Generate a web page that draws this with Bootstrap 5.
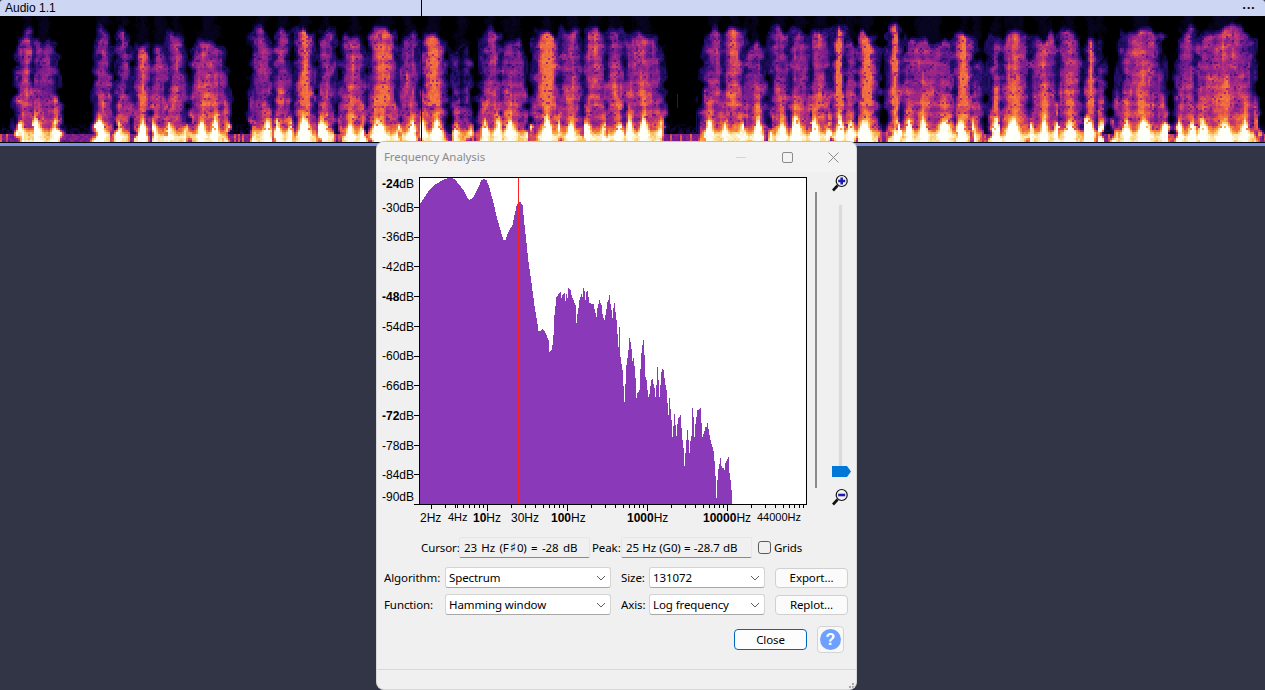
<!DOCTYPE html>
<html lang="en">
<head>
<meta charset="utf-8">
<title>Frequency Analysis</title>
<link href="https://cdn.jsdelivr.net/npm/bootstrap@5.3.0/dist/css/bootstrap.min.css" rel="stylesheet">
<style>
html,body{height:100%;overflow:hidden;background:#323546;margin:0}
body{position:relative;font-family:"Noto Sans","Open Sans",sans-serif;font-size:11.5px;letter-spacing:-.1px;color:#000}
.track-head{height:16px;background:#cdd6f2;font-family:"Liberation Sans",sans-serif;font-size:12px;letter-spacing:0;line-height:15px;padding:0 5px;border-radius:3px 3px 0 0}
.track-dots{font-size:8px;letter-spacing:1.6px;line-height:12px;padding-right:4px}
.spectro{display:block;width:1265px;height:126px;background:#000}
.track-edge{height:4px;background:#8090e0;border-top:1px solid #000}
.play-line{position:absolute;left:421px;top:0;width:1px;height:142px;background:#000}
.win{position:absolute;left:376px;top:141px;width:481px;height:549px;background:#f0f0f0;border:1px solid #d8d8d8;border-top-color:#c0c0c0;border-radius:8px;overflow:hidden}
.win-title{height:30px;background:#f3f3f3;color:#8b8b8b;padding-left:7px}
.win-ctl{width:46px;height:30px}
.plot-svg{display:block;width:435px;height:355px;font-family:"Liberation Sans",sans-serif;font-size:12px;letter-spacing:0}
.side-svg{display:block;width:44px;height:355px}
.readouts{height:21px;margin-top:10px;padding-left:44px}
.cap{white-space:nowrap}
.cap-cur{width:36px}
.cap-peak{width:27px}
.readout{width:131px;height:21px;line-height:19px;background:#f0f0f0;border:1px solid #e6e6e6;border-bottom-color:#8a8a8a;border-radius:2px;padding:0 4px;margin:0 2px;white-space:nowrap;word-spacing:.4px}
.readout-cur{word-spacing:1.5px}
.sharp-g{font-family:"DejaVu Sans",sans-serif;font-size:13px;margin:0 1px}
.chk{width:13px;height:13px;margin:0 3px 0 4px;background-color:#f0f0f0;border:1px solid #5a5a5a;border-radius:3px}
.ctl-grid{display:grid;grid-template-columns:61px 166px 10px 28px 116px 10px 73px;row-gap:6px;padding-left:7px;margin-top:9px;align-items:center}
.pick{height:21px;min-height:21px;padding:0 18px 0 3px;font-size:11.5px;letter-spacing:-.1px;color:#000;border:1px solid #d4d4d4;border-bottom-color:#a8a8a8;border-radius:3px;background-image:url("data:image/svg+xml,%3Csvg xmlns='http://www.w3.org/2000/svg' viewBox='0 0 10 6'%3E%3Cpath d='M1 1l4 4 4-4' fill='none' stroke='%23606060'/%3E%3C/svg%3E");background-size:10px 6px;background-position:right 4px center;font-family:inherit;line-height:19px}
.act{height:20px;padding:0;font-size:11.5px;letter-spacing:-.1px;line-height:18px;color:#000;background:#fbfbfb;border:1px solid #d0d0d0;border-radius:4px;font-family:inherit}
.act-main{width:73px;height:21px;background:#fdfdfd;border-color:#0067c0}
.help-b{width:27px;height:27px;margin-left:10px;padding:0;background:#f8f8f8;border:1px solid #d4d4d4;border-radius:4px}
.help-dot{width:21px;height:21px;background:#6ea1ff;color:#fff;font:700 16px/21px "Liberation Sans",sans-serif}
.act-row{margin-top:11px;padding-right:12px}
.win-foot{position:absolute;left:0;right:0;top:527px;height:22px;border-top:1px solid #d9d9d9}
.grip{position:absolute;right:1px;bottom:0}
</style>
</head>
<body>
<div class="track-head d-flex justify-content-between align-items-center">
  <span>Audio 1.1</span><span class="track-dots">•••</span>
</div>
<canvas class="spectro" id="sp" width="1265" height="126"></canvas>
<div class="track-edge"></div>
<div class="play-line"></div>

<div class="win">
  <div class="win-title d-flex justify-content-between align-items-center">
    <span>Frequency Analysis</span>
    <div class="d-flex">
      <div class="win-ctl d-flex align-items-center justify-content-center"><svg width="10" height="10"><path d="M0 5.5H10" stroke="#d4d4d4"/></svg></div>
      <div class="win-ctl d-flex align-items-center justify-content-center"><svg width="11" height="11"><rect x=".5" y=".5" width="10" height="10" rx="1.5" fill="none" stroke="#8b8b8b"/></svg></div>
      <div class="win-ctl d-flex align-items-center justify-content-center"><svg width="11" height="11"><path d="M.5 .5L10.5 10.5M10.5 .5L.5 10.5" stroke="#8b8b8b"/></svg></div>
    </div>
  </div>
  <div class="d-flex">
    <svg class="plot-svg" viewBox="377 172 435 355">
      <rect x="419.5" y="177.5" width="387" height="327" fill="#fff"/>
      <polygon id="curve" fill="#8a3ab9" shape-rendering="crispEdges" points=""/>
      <rect x="518" y="177" width="1" height="327" fill="#ff2020" shape-rendering="crispEdges"/>
      <rect x="419.5" y="177.5" width="387" height="327" fill="none" stroke="#000"/>
      <path stroke="#000" fill="none" d="M414 207.5h5M414 237.5h5M414 266.5h5M414 296.5h5M414 326.5h5M414 356.5h5M414 385.5h5M414 415.5h5M414 445.5h5M414 474.5h5M414 504.5h5
        M431.5 505v4M445.5 505v3M455.5 505v3M457.5 505v3M463.5 505v3M469.5 505v3M474.5 505v3M479.5 505v3M483.5 505v3M487.5 505v6
        M511.5 505v3M525.5 505v3M535.5 505v3M543.5 505v3M549.5 505v3M554.5 505v3M559.5 505v3M563.5 505v3M567.5 505v6
        M591.5 505v3M605.5 505v3M615.5 505v3M623.5 505v3M629.5 505v3M634.5 505v3M639.5 505v3M643.5 505v3M647.5 505v6
        M671.5 505v3M685.5 505v3M695.5 505v3M703.5 505v3M709.5 505v3M714.5 505v3M719.5 505v3M723.5 505v3M727.5 505v6
        M751.5 505v3M765.5 505v3M775.5 505v3M783.5 505v3M789.5 505v3M794.5 505v3M799.5 505v3M803.5 505v3"/>
      <g text-anchor="end" fill="#000">
        <text x="414" y="188"><tspan font-weight="700">-24</tspan>dB</text>
        <text x="414" y="212">-30dB</text>
        <text x="414" y="241">-36dB</text>
        <text x="414" y="271">-42dB</text>
        <text x="414" y="301"><tspan font-weight="700">-48</tspan>dB</text>
        <text x="414" y="331">-54dB</text>
        <text x="414" y="360">-60dB</text>
        <text x="414" y="390">-66dB</text>
        <text x="414" y="420"><tspan font-weight="700">-72</tspan>dB</text>
        <text x="414" y="450">-78dB</text>
        <text x="414" y="479">-84dB</text>
        <text x="414" y="501">-90dB</text>
      </g>
      <g fill="#000">
        <text x="420" y="522">2Hz</text>
        <text x="448" y="521" font-size="11">4Hz</text>
        <text x="473" y="522"><tspan font-weight="700">10</tspan>Hz</text>
        <text x="511" y="522">30Hz</text>
        <text x="551" y="522"><tspan font-weight="700">100</tspan>Hz</text>
        <text x="627" y="522"><tspan font-weight="700">1000</tspan>Hz</text>
        <text x="703" y="522"><tspan font-weight="700">10000</tspan>Hz</text>
        <text x="757" y="521" font-size="11">44000Hz</text>
      </g>
    </svg>
    <svg class="side-svg" viewBox="812 172 44 355">
      <rect x="815" y="192" width="2" height="296" fill="#8a8a8a"/>
      <rect x="839" y="205" width="3" height="262" fill="#d6dada" stroke="#e2e4e4" stroke-width=".5"/>
      <path d="M832 466H847L851 471.5L847 477H832Z" fill="#0078d7"/>
      <circle cx="841.7" cy="181" r="5.5" fill="#f4f4f4" stroke="#111" stroke-width="1.2"/>
      <path d="M833 190.5L837.6 185.5" stroke="#111" stroke-width="2.6"/>
      <path d="M841.7 177.5V184.5M838.2 181H845.2" stroke="#1c1cb0" stroke-width="2.6"/>
      <circle cx="841.7" cy="495" r="5.5" fill="#f4f4f4" stroke="#111" stroke-width="1.2"/>
      <path d="M833 504.5L837.6 499.5" stroke="#111" stroke-width="2.6"/>
      <path d="M838.2 495H845.2" stroke="#1c1cb0" stroke-width="2.6"/>
    </svg>
  </div>
  <div class="readouts d-flex align-items-center">
    <span class="cap cap-cur">Cursor:</span>
    <div class="readout readout-cur">23 Hz (F<span class="sharp-g">♯</span>0) = -28 dB</div>
    <span class="cap cap-peak">Peak:</span>
    <div class="readout">25 Hz (G0) = -28.7 dB</div>
    <input class="form-check-input chk mt-0" type="checkbox" id="grids">
    <label for="grids" class="cap">Grids</label>
  </div>
  <div class="ctl-grid">
    <label class="cap">Algorithm:</label>
    <select class="form-select pick"><option>Spectrum</option></select>
    <span></span>
    <label class="cap">Size:</label>
    <select class="form-select pick"><option>131072</option></select>
    <span></span>
    <button class="btn act" type="button">Export...</button>
    <label class="cap">Function:</label>
    <select class="form-select pick"><option>Hamming window</option></select>
    <span></span>
    <label class="cap">Axis:</label>
    <select class="form-select pick"><option>Log frequency</option></select>
    <span></span>
    <button class="btn act" type="button">Replot...</button>
  </div>
  <div class="act-row d-flex justify-content-end align-items-center">
    <button class="btn act act-main" type="button">Close</button>
    <button class="btn help-b d-flex align-items-center justify-content-center" type="button"><span class="help-dot rounded-circle d-block">?</span></button>
  </div>
  <div class="win-foot">
    <svg class="grip" width="10" height="9" fill="#a8a8a8"><rect x="7" y="1" width="2" height="2"/><rect x="4" y="4" width="2" height="2"/><rect x="7" y="4" width="2" height="2"/><rect x="1" y="7" width="2" height="2"/><rect x="4" y="7" width="2" height="2"/><rect x="7" y="7" width="2" height="2"/></svg>
  </div>
</div>

<script>
(function(){
  var seed=12345;
  function R(){seed=(seed*1664525+1013904223)>>>0;return seed/4294967296;}
  function hash(i,j){var h=Math.sin(i*127.1+j*311.7)*43758.5453;return h-Math.floor(h);}
  function vn(x,y){var i=Math.floor(x),j=Math.floor(y),u=x-i,v=y-j;u=u*u*(3-2*u);v=v*v*(3-2*v);
    var a=hash(i,j),b=hash(i+1,j),c=hash(i,j+1),d=hash(i+1,j+1);return a+(b-a)*u+(c-a)*v+(a-b-c+d)*u*v;}
  function ss(a,b,x){var t=Math.max(0,Math.min(1,(x-a)/(b-a)));return t*t*(3-2*t);}

  var A=[420,203,424,197,429,190,434,185,439,182,444,179,448,178,452,178,455,180,459,185,463,190,467,198,469,200,472,198,474,195,478,187,481,180,483,179,486,180,489,188,493,203,496,216,498,223,501,234,503,240,505,240,507,234,510,228,512,225,514,215,516,206,518,202,520,202,522,205,524,225,526,243,528,262,531,283,534,306,537,324,538,331,540,331,542,329,544,331,546,335,548,340,549,352,551,350,552,345,553,335,554,315,556,297,558,294,560,292,562,295,564,293,566,294,568,288,570,290,571,295,573,300,575,305,576,323,578,308,579,300,581,294,583,290,585,292,587,291,589,303,592,304,594,309,596,317,597,308,599,300,601,305,602,315,604,320,606,309,607,302,609,297,611,310,612,318,613,308,614,303,616,320,618,347,619,328,620,357,622,370,624,402,626,365,628,350,629,338,630,342,632,355,634,360,636,395,639,390,640,370,641,353,642,345,643,340,645,370,648,400,650,388,651,380,653,377,655,392,656,385,657,367,658,380,659,397,660,385,661,372,663,370,665,385,666,390,668,415,669,398,671,420,672,437,674,414,675,425,676,430,678,418,680,415,682,440,683,448,684,466,686,440,687,430,689,450,691,435,692,408,693,420,694,433,696,415,698,410,700,408,702,437,704,430,707,420,709,437,712,447,714,455,716,496,717,480,718,469,720,458,721,466,722,468,724,470,725,463,728,457,729,473,730,480,731,490,732,504];
  var pts=['420,504'],k=0;
  for(var px=420;px<732;px++){
    while(k<A.length-4&&A[k+2]<=px)k+=2;
    var t=(px-A[k])/(A[k+2]-A[k]),yy=A[k+1]+(A[k+3]-A[k+1])*t;
    if(px>556&&px<730){var q=R();if(q<.14)yy+=R()*10;else if(q<.3)yy-=R()*3;}
    yy=Math.round(yy);
    pts.push(px+','+yy,(px+1)+','+yy);
  }
  pts.push('732,504');
  document.getElementById('curve').setAttribute('points',pts.join(' '));

  var c=document.getElementById('sp').getContext('2d');
  var stops=[[0,0,0,0],[.14,14,8,60],[.28,44,16,120],[.42,118,28,142],[.54,176,44,128],[.66,236,92,66],[.78,250,160,60],[.89,252,226,150],[1,255,255,250]];
  function col(v){v=Math.max(0,Math.min(1,v));for(var i=1;i<stops.length;i++){if(v<=stops[i][0]){var a=stops[i-1],b=stops[i],t=(v-a[0])/(b[0]-a[0]);return 'rgb('+Math.round(a[1]+(b[1]-a[1])*t)+','+Math.round(a[2]+(b[2]-a[2])*t)+','+Math.round(a[3]+(b[3]-a[3])*t)+')';}}return '#fff';}
  var B=[[19,32,30,.04,3],[33,52,38,0,8],
  [97,109,25,.01,3],[117,127,26,.02,2],[135,149,38,.07,2],[153,165,38,.02,3],[169,182,27,.05,3],[193,222,38,.05,6],
  [254,268,26,.02,4],[275,288,28,.03,3],[296,312,25,.1,3],[321,332,24,.02,3],[342,362,30,.06,3],[370,395,24,.1,3],[400,416,32,.03,3],[422,442,28,.12,4],
  [453,468,48,-.1,0],[483,498,28,.02,5],[501,522,40,.02,3],[535,558,25,.14,3],[561,580,26,.03,3],[585,604,26,.06,3],[607,622,25,.05,3],[626,658,30,.05,5],
  [706,722,26,.02,5],[724,742,22,.1,3],[744,762,42,.02,4],[772,786,26,.02,4],[790,808,26,.02,3],[811,827,24,.05,3],[833,843,24,.14,3],[843,855,36,.02,3],[857,875,31,.13,3],
  [889,899,23,.14,1],[903,951,38,.04,5],[955,971,28,.12,2],[971,979,60,0,0],
  [991,999,30,.06,1],[1001,1027,32,.07,2],[1031,1055,32,.05,3],[1059,1079,26,.06,2],[1085,1095,30,.12,2],[1095,1102,60,0,0],
  [1122,1158,25,.06,10],[1180,1194,24,.03,6],[1196,1250,24,.07,7]];
  var cw=[];for(var x=0;x<1265;x+=2){cw.push(R());}
  for(var x=0;x<1265;x+=2){
    var stripe=cw[x/2];
    for(var y=16;y<142;y+=2){
      var f=(142-y)/126,a=0,hotv=0,bi=0;
      var jx=(vn(x/5,y/7)-.5)*9,jt=(vn(x/7,3.3)-.5)*14;
      for(var i=0;i<B.length;i++){
        var b=B[i];
        var w=(b[4]+1)*Math.pow(1-f,1.8);
        var top=b[2]+jt;
        var edgeTop=Math.min(1,Math.max(0,(y-top)/14));
        var taper=(1-edgeTop)*(b[1]-b[0])*.28;
        var l=b[0]-w+taper,r=b[1]+w-taper;
        var e=Math.min(x-l,r-x)+jx;
        if(e<-6)continue;
        var m=Math.min(1,Math.max(0,(e+6)/9))*Math.min(1,edgeTop*1.8+.12);
        var mid=(b[0]+b[1])/2,hc=1-Math.abs(x-mid)/Math.max(4,(b[1]-b[0])/2);
        if(m>a){a=m;hotv=b[3]*4*Math.max(0,hc)*(f>.3?1:.3);bi=i;}
      }
      if(a<=0&&f>=.16)continue;
      var pulse=.5+.5*Math.sin(x*.36+bi*1.7+Math.sin(x*.09)*1.3);
      var fp=.07+.09*pulse*pulse*(.5+.9*vn(bi*3.1,1.5));
      var L=.40+.24*ss(.58,.1,f)*(.45+.75*pulse)+.36*ss(fp+.08,fp-.03,f);
      var field=(vn(x/3.2,y/13)-.5)*.17+(vn(x/9,y/5)-.5)*.12;
      var band=.03*Math.sin(y*.62+Math.sin(x*.03)*2);
      var n=(R()-.5)*.08;
      var v=a*(L+hotv*.75+field*(f>.12?1:.25)+band+n+(stripe>.94?.04:0));
      if(f>.3&&v>.72)v=.72-(R()*.05);
      if(a<.45)v=a*.62+n*.3;
      if(a>0&&f>.1&&R()<.06)v*=.75;
      if(f<.075){var fl=.37+R()*.12+(stripe>.85?.2:0);if(fl>v)v=fl;}
      else if(f<.17){var fn=(R()*.24-.02)*(1-(f-.075)/.095);if(fn>v)v=fn;}
      if(v<.03)continue;
      c.fillStyle=col(v);c.fillRect(x,y-16,2,2);
    }
  }
  c.fillStyle='rgb(40,20,110)';c.fillRect(677,78,1,14);c.fillStyle='rgb(24,14,80)';c.fillRect(696,96,1,20);
})();
</script>
</body>
</html>
